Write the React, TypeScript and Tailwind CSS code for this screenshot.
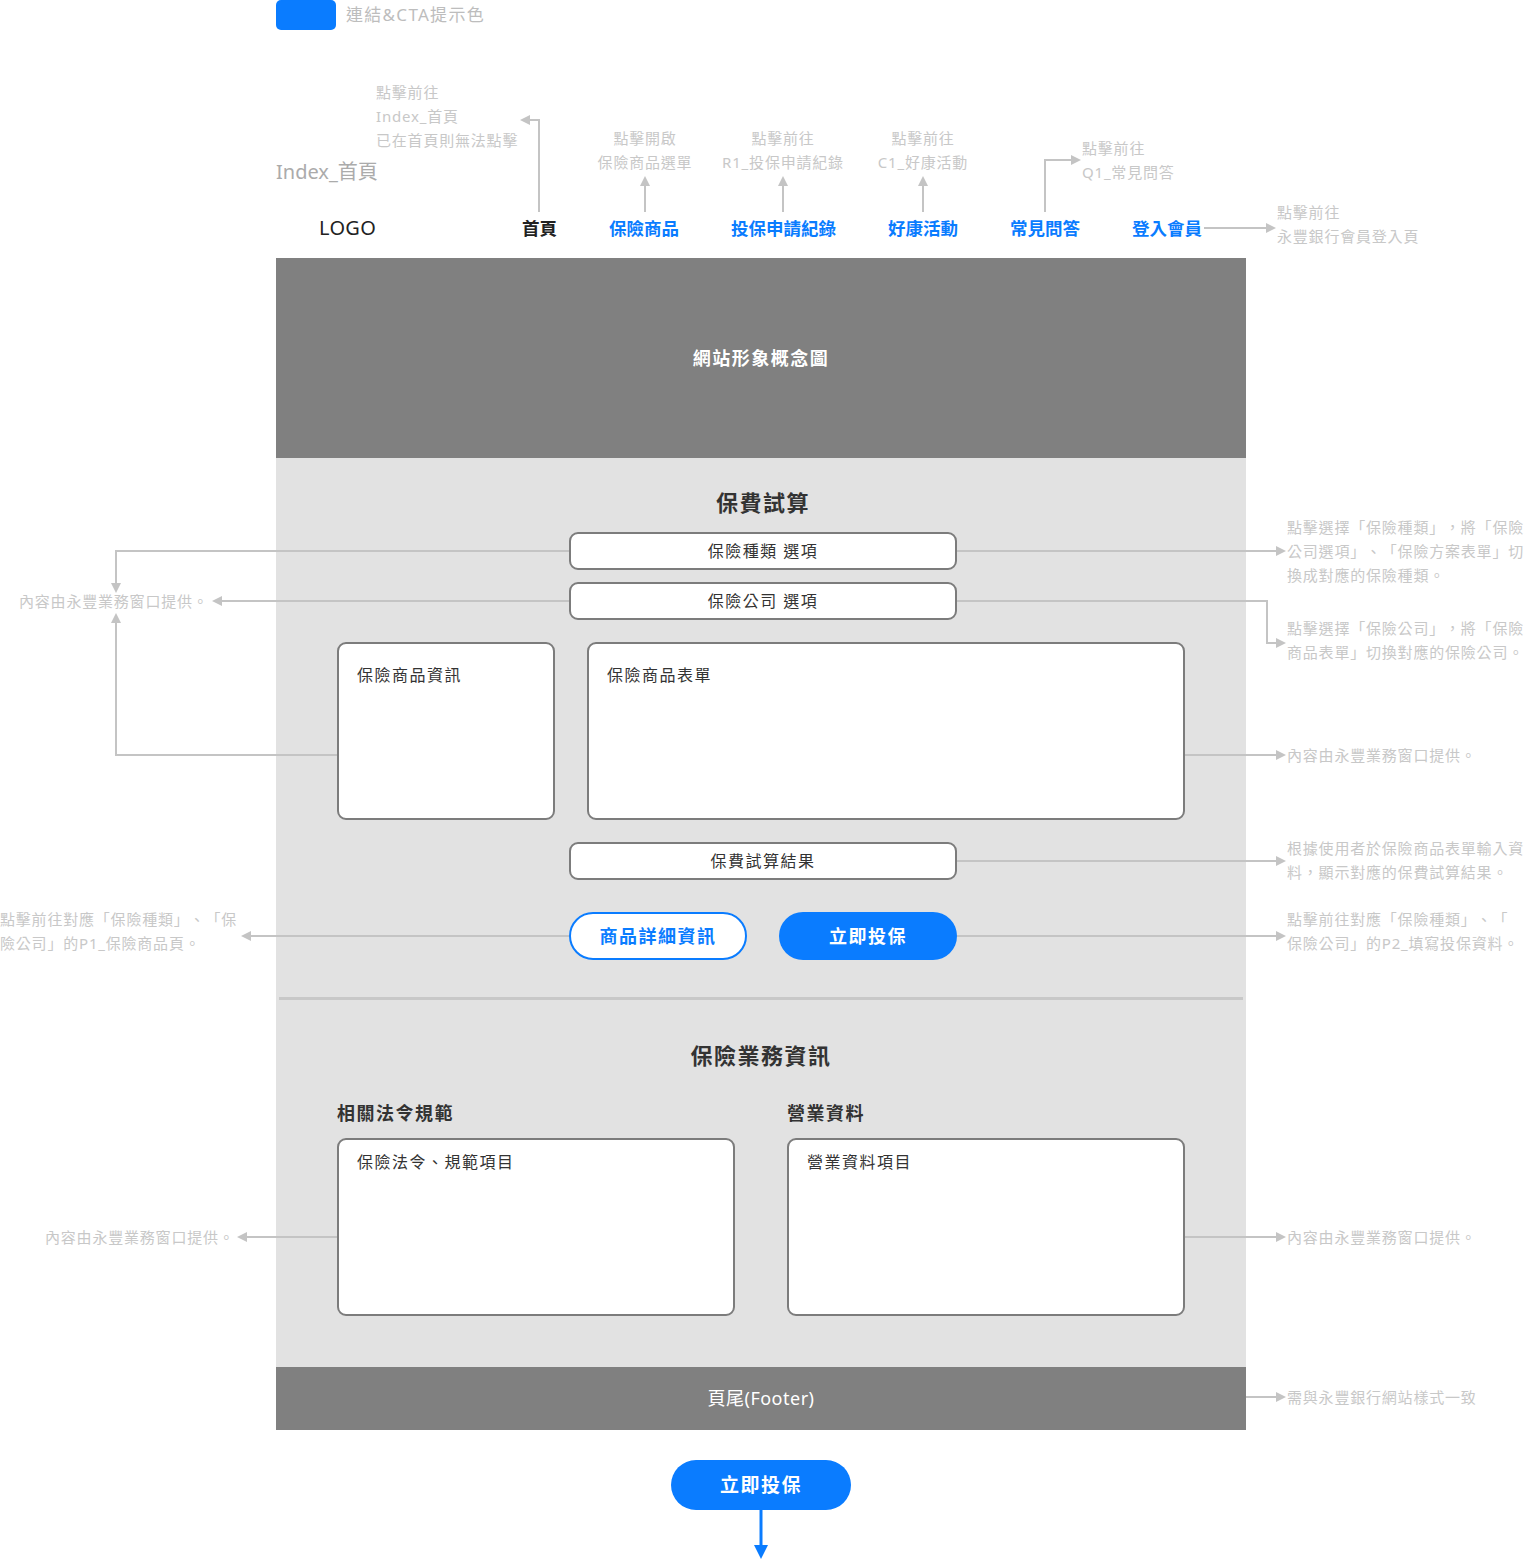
const LINE = '#c4c4c4'
const BLUE = '#0a7cff'

type Dir = 'l' | 'r' | 'u' | 'd'

// arrowhead with its tip at (x, y)
function Head({ x, y, d, c = LINE, s = 10 }: { x: number; y: number; d: Dir; c?: string; s?: number }) {
  const h = s / 2
  const pts =
    d === 'r'
      ? `${x},${y} ${x - s},${y - h} ${x - s},${y + h}`
      : d === 'l'
        ? `${x},${y} ${x + s},${y - h} ${x + s},${y + h}`
        : d === 'u'
          ? `${x},${y} ${x - h},${y + s} ${x + h},${y + s}`
          : `${x},${y} ${x - h},${y - s} ${x + h},${y - s}`
  return <polygon points={pts} fill={c} />
}

function Wire({ pts, c = LINE, w = 2 }: { pts: string; c?: string; w?: number }) {
  return <polyline points={pts} fill="none" stroke={c} strokeWidth={w} />
}

function Connectors() {
  return (
    <svg className="absolute left-0 top-0 pointer-events-none" width={1526} height={1560}>
      {/* header */}
      <Wire pts="539,212 539,120 528,120" />
      <Head x={520} y={120} d="l" />
      <Wire pts="645,212 645,185" />
      <Head x={645} y={176} d="u" />
      <Wire pts="783,212 783,185" />
      <Head x={783} y={176} d="u" />
      <Wire pts="923,212 923,185" />
      <Head x={923} y={176} d="u" />
      <Wire pts="1045,212 1045,160 1072,160" />
      <Head x={1081} y={160} d="r" />
      <Wire pts="1204,228 1267,228" />
      <Head x={1276} y={228} d="r" />

      {/* 保費試算 left */}
      <Wire pts="569,551 116,551 116,584" />
      <Head x={116} y={593} d="d" />
      <Wire pts="569,601 221,601" />
      <Head x={212} y={601} d="l" />
      <Wire pts="337,755 116,755 116,622" />
      <Head x={116} y={613} d="u" />
      <Wire pts="569,936 250,936" />
      <Head x={241} y={936} d="l" />

      {/* 保費試算 right */}
      <Wire pts="957,551 1277,551" />
      <Head x={1286} y={551} d="r" />
      <Wire pts="957,601 1267,601 1267,643 1277,643" />
      <Head x={1286} y={643} d="r" />
      <Wire pts="1185,755 1277,755" />
      <Head x={1286} y={755} d="r" />
      <Wire pts="957,861 1277,861" />
      <Head x={1286} y={861} d="r" />
      <Wire pts="957,936 1277,936" />
      <Head x={1286} y={936} d="r" />

      {/* 保險業務資訊 + footer */}
      <Wire pts="337,1237 246,1237" />
      <Head x={237} y={1237} d="l" />
      <Wire pts="1185,1237 1277,1237" />
      <Head x={1286} y={1237} d="r" />
      <Wire pts="1246,1397 1277,1397" />
      <Head x={1286} y={1397} d="r" />

      {/* bottom CTA */}
      <Wire pts="761,1510 761,1547" c={BLUE} w={3} />
      <Head x={761} y={1559} d="d" c={BLUE} s={14} />
    </svg>
  )
}

function Notes() {
  const note = 'absolute whitespace-nowrap text-[15px] leading-[24px] tracking-[0.8px] text-[#c8c8c8]'
  return (
    <>
      <div className={`${note} left-[376px] top-[80px]`}>
        點擊前往<br />Index_首頁<br />已在首頁則無法點擊
      </div>
      <div className={`${note} left-[585px] top-[126px] w-[120px] text-center`}>
        點擊開啟<br />保險商品選單
      </div>
      <div className={`${note} left-[713px] top-[126px] w-[140px] text-center`}>
        點擊前往<br />R1_投保申請紀錄
      </div>
      <div className={`${note} left-[863px] top-[126px] w-[120px] text-center`}>
        點擊前往<br />C1_好康活動
      </div>
      <div className={`${note} left-[1082px] top-[136px]`}>
        點擊前往<br />Q1_常見問答
      </div>
      <div className={`${note} left-[1277px] top-[200px]`}>
        點擊前往<br />永豐銀行會員登入頁
      </div>

      <div className={`${note} left-[19px] top-[589px]`}>內容由永豐業務窗口提供。</div>
      <div className={`${note} left-0 top-[907px]`}>
        點擊前往對應「保險種類」、「保<br />險公司」的P1_保險商品頁。
      </div>
      <div className={`${note} left-[45px] top-[1225px]`}>內容由永豐業務窗口提供。</div>

      <div className={`${note} left-[1287px] top-[515px]`}>
        點擊選擇「保險種類」，將「保險<br />公司選項」、「保險方案表單」切<br />換成對應的保險種類。
      </div>
      <div className={`${note} left-[1287px] top-[616px]`}>
        點擊選擇「保險公司」，將「保險<br />商品表單」切換對應的保險公司。
      </div>
      <div className={`${note} left-[1287px] top-[743px]`}>內容由永豐業務窗口提供。</div>
      <div className={`${note} left-[1287px] top-[836px]`}>
        根據使用者於保險商品表單輸入資<br />料，顯示對應的保費試算結果。
      </div>
      <div className={`${note} left-[1287px] top-[907px]`}>
        點擊前往對應「保險種類」、「<br />保險公司」的P2_填寫投保資料。
      </div>
      <div className={`${note} left-[1287px] top-[1225px]`}>內容由永豐業務窗口提供。</div>
      <div className={`${note} left-[1287px] top-[1385px]`}>需與永豐銀行網站樣式一致</div>
    </>
  )
}

const navItems = ['保險商品', '投保申請紀錄', '好康活動', '常見問答', '登入會員']

export default function App() {
  return (
    <div
      lang="zh-TW"
      className="relative w-[1526px] h-[1560px] bg-white overflow-hidden [text-spacing-trim:space-all] font-['Noto_Sans','Noto_Sans_CJK_TC',sans-serif]"
    >
      <div className="ml-[276px] w-[970px] flex flex-col">
        {/* Legend */}
        <div className="flex items-center h-[30px]">
          <div className="w-[60px] h-[30px] rounded-[5px] bg-[#0a7cff]" />
          <span className="ml-[10px] text-[17px] leading-[30px] tracking-[1.3px] text-[#bdbdbd]">連結&amp;CTA提示色</span>
        </div>

        <div className="mt-[128px] h-[28px] leading-[28px] text-[20px] text-[#ababab]">Index_首頁</div>

        {/* Nav */}
        <div className="mt-[22px] h-[40px] flex items-center">
          <div className="ml-[43px] w-[203px] text-[20px] tracking-[0.3px] text-[#222]">LOGO</div>
          <div className="flex items-center gap-[52px] text-[17.5px] font-bold">
            <span className="text-[#222]">首頁</span>
            {navItems.map((n) => (
              <span key={n} className="text-[#0a7cff]">{n}</span>
            ))}
          </div>
        </div>

        {/* Hero */}
        <div className="mt-[10px] h-[200px] bg-[#808080] flex items-center justify-center text-white text-[18px] font-bold tracking-[1.5px]">
          網站形象概念圖
        </div>

        {/* Main section */}
        <div className="h-[909px] bg-[#e2e2e2] flex flex-col pt-[28px] text-[#333]">
          <div className="h-[32px] leading-[32px] text-center pl-[4px] text-[22px] font-bold tracking-[1.5px]">保費試算</div>

          <div className="mt-[14px] ml-[293px] w-[388px] h-[38px] rounded-[9px] border-2 border-[#7c7c7c] bg-white flex items-center justify-center text-[16px] tracking-[1.5px]">
            保險種類 選項
          </div>
          <div className="mt-[12px] ml-[293px] w-[388px] h-[38px] rounded-[9px] border-2 border-[#7c7c7c] bg-white flex items-center justify-center text-[16px] tracking-[1.5px]">
            保險公司 選項
          </div>

          <div className="mt-[22px] ml-[61px] flex gap-[32px]">
            <div className="w-[218px] h-[178px] rounded-[9px] border-2 border-[#7c7c7c] bg-white pt-[19px] px-[18px] text-[16px] leading-[24px] tracking-[1.5px]">
              保險商品資訊
            </div>
            <div className="w-[598px] h-[178px] rounded-[9px] border-2 border-[#7c7c7c] bg-white pt-[19px] px-[18px] text-[16px] leading-[24px] tracking-[1.5px]">
              保險商品表單
            </div>
          </div>

          <div className="mt-[22px] ml-[293px] w-[388px] h-[38px] rounded-[9px] border-2 border-[#7c7c7c] bg-white flex items-center justify-center text-[16px] tracking-[1.5px]">
            保費試算結果
          </div>

          <div className="mt-[32px] ml-[293px] flex gap-[32px] text-[18px] font-bold tracking-[1.5px]">
            <div className="w-[178px] h-[48px] rounded-full border-2 border-[#0a7cff] bg-white text-[#0a7cff] flex items-center justify-center">
              商品詳細資訊
            </div>
            <div className="w-[178px] h-[48px] rounded-full bg-[#0a7cff] text-white flex items-center justify-center">
              立即投保
            </div>
          </div>

          <div className="mt-[37px] mx-[3px] h-[3px] bg-[#c8c8c8]" />

          <div className="mt-[39px] h-[32px] leading-[32px] text-center text-[22px] font-bold tracking-[1.5px]">保險業務資訊</div>

          <div className="mt-[29px] ml-[61px] flex gap-[52px]">
            <div className="w-[398px] flex flex-col">
              <div className="h-[26px] leading-[26px] text-[18px] font-bold tracking-[1.5px]">相關法令規範</div>
              <div className="mt-[12px] h-[178px] rounded-[9px] border-2 border-[#7c7c7c] bg-white pt-[10px] px-[18px] text-[16px] leading-[24px] tracking-[1.5px]">
                保險法令、規範項目
              </div>
            </div>
            <div className="w-[398px] flex flex-col">
              <div className="h-[26px] leading-[26px] text-[18px] font-bold tracking-[1.5px]">營業資料</div>
              <div className="mt-[12px] h-[178px] rounded-[9px] border-2 border-[#7c7c7c] bg-white pt-[10px] px-[18px] text-[16px] leading-[24px] tracking-[1.5px]">
                營業資料項目
              </div>
            </div>
          </div>
        </div>

        {/* Footer */}
        <div className="h-[63px] bg-[#808080] flex items-center justify-center text-white text-[18px] tracking-[0.5px]">
          頁尾(Footer)
        </div>

        {/* Bottom CTA */}
        <div className="mt-[30px] ml-[395px] w-[180px] h-[50px] rounded-full bg-[#0a7cff] text-white flex items-center justify-center text-[19px] font-bold tracking-[1.5px]">
          立即投保
        </div>
      </div>

      <Connectors />
      <Notes />
    </div>
  )
}
